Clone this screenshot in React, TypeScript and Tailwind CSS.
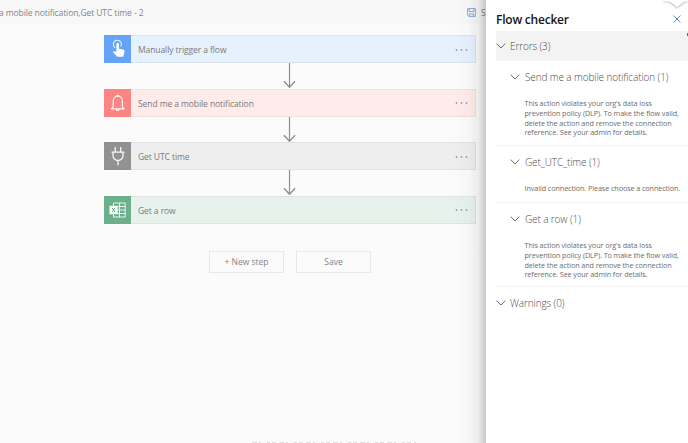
import type { ReactNode } from 'react';

const TouchIcon = () => (
  <svg width="27" height="28" viewBox="0 0 27 28" fill="none">
    <path d="M11.300 12.700a4 4 0 1 1 5.400-1.200" stroke="#fff" strokeWidth="1.200" opacity=".8" />
    <path d="M12.400 9.200a1.300 1.300 0 0 1 2.600 0v4.600l4.200.8c1 .2 1.400.8 1.300 1.700l-.8 4.200c-.1.8-.5 1.200-1.200 1.200h-4.800c-.5 0-.9-.2-1.200-.6l-3.200-3.700c-.4-.5 0-1.200.7-1.200l2.400.5z" fill="#fff" />
  </svg>
);

const BellIcon = () => (
  <svg width="27" height="28" viewBox="0 0 27 28" fill="none" stroke="#fff" strokeOpacity=".9" strokeWidth="1.2">
    <path d="M7.200 19.800c1.500-.7 2-1.300 2-2.800v-5.200a4.600 4.600 0 0 1 9.200 0V17c0 1.500.5 2.100 2 2.800z" />
    <path d="M12.200 20c.2 1.900 2.800 1.900 3 0" />
    <path d="M12.600 7.200c.2-1.100 2.200-1.100 2.400 0" />
  </svg>
);

const PlugIcon = () => (
  <svg width="27" height="28" viewBox="0 0 27 28" fill="none" stroke="#fff" strokeOpacity=".92" strokeWidth="1.3">
    <path d="M11.200 5v5M16.700 5v5M7.500 10.200h13M9 10.400v3.100a5 5 0 0 0 10 0v-3.100M14 18.500v4.700" />
  </svg>
);

const ExcelIcon = () => (
  <svg width="27" height="28" viewBox="0 0 27 28" fill="none">
    <path d="M9.500 7h11.700v14H9.500zM9.500 10.500h11.700M9.500 14h11.700M9.500 17.500h11.700M15.500 7v14" stroke="#fff" strokeOpacity=".85" strokeWidth="1" />
    <path d="M5.500 9.800h8.200v8.400H5.500z" fill="#fff" />
    <path d="M8 11.800l3.200 4.500M11.200 11.800L8 16.300" stroke="#67aa85" strokeWidth="1" />
  </svg>
);

const Arrow = () => (
  <svg className="ml-[179px] block" width="14" height="25.500" viewBox="0 0 14 25.500" fill="none" stroke="#8f8f8f">
    <path d="M6.500 0v24" strokeWidth="1.200" />
    <path d="M.9 18.300l5.600 5.900 5.600-5.900" strokeWidth="1.400" />
  </svg>
);

const Chevron = () => (
  <svg className="shrink-0" width="10" height="6" viewBox="0 0 10 6" fill="none" stroke="#6a6a6a" strokeWidth="1">
    <path d="M.7.6L5 5 9.300.6" />
  </svg>
);

function Step({ label, tile, body, children }: { label: string; tile: string; body: string; children: ReactNode }) {
  return (
    <div className={`flex h-[28px] w-[372px] items-center border border-black/5 ${body}`}>
      <div className={`-ml-px flex h-[28px] w-[27px] shrink-0 ${tile}`}>{children}</div>
      <span className="mt-[3px] ml-[7px] text-[8.500px] tracking-[-0.08px] whitespace-nowrap text-[#7b7b7b]">{label}</span>
      <svg className="mt-px mr-[7px] ml-auto" width="13" height="2" viewBox="0 0 13 2" fill="#86a3c4">
        <circle cx="1.500" cy="1" r=".9" />
        <circle cx="6.500" cy="1" r=".9" />
        <circle cx="11.500" cy="1" r=".9" />
      </svg>
    </div>
  );
}

function Issue({ title, height, children }: { title: string; height: string; children: ReactNode }) {
  return (
    <section className={`border-b border-[#f3f3f3] pl-[14px] ${height}`}>
      <div className="flex h-[31px] items-center gap-[5px]">
        <Chevron />
        <h3 className="pt-px text-[10px] font-light tracking-[-0.12px] whitespace-nowrap text-[#4c4c4c]">{title}</h3>
      </div>
      <div className="mt-[7px] ml-[14.500px] text-[7.200px] leading-[9.800px] tracking-[-0.07px] whitespace-nowrap text-[#6c6c6c]">{children}</div>
    </section>
  );
}

const Policy = () => (
  <>
    <p>This action violates your org's data loss</p>
    <p>prevention policy (DLP). To make the flow valid,</p>
    <p>delete the action and remove the connection</p>
    <p>reference. See your admin for details.</p>
  </>
);

export default function App() {
  return (
    <div className="flex h-[443px] w-[688px] overflow-hidden bg-[#fbfbfb] font-['Open_Sans','Noto_Sans',sans-serif]">
      <main className="relative flex h-full w-[486px] shrink-0 flex-col overflow-hidden">
        <header className="flex h-[25px] shrink-0 items-center bg-[#f8f8f8] text-[8.500px] whitespace-nowrap text-[#858585]">
          <span className="mt-[2px] -ml-px w-[468px] shrink-0 tracking-[-0.09px]">a mobile notification,Get UTC time - 2</span>
          <svg className="shrink-0" width="9" height="9" viewBox="0 0 9 9" fill="none" stroke="#7d9fd0" strokeWidth=".9">
            <path d="M.6.600h7.800v7.800H1.800L.600 7.200zM2.300.600v3h4.500v-3M2.500 8.400V5.900h3.900v2.500" />
          </svg>
          <span className="mt-[2px] ml-[5px]">S</span>
        </header>
        <div className="mt-[10px] ml-[104px] flex flex-col">
          <Step label="Manually trigger a flow" tile="bg-[#64a3f6]" body="bg-[#e6f1fe]"><TouchIcon /></Step>
          <Arrow />
          <Step label="Send me a mobile notification" tile="bg-[#fb8585]" body="bg-[#ffecea]"><BellIcon /></Step>
          <Arrow />
          <Step label="Get UTC time" tile="bg-[#929292]" body="bg-[#eeeeee]"><PlugIcon /></Step>
          <Arrow />
          <Step label="Get a row" tile="bg-[#6baf8b]" body="bg-[#e8f2ec]"><ExcelIcon /></Step>
        </div>
        <div className="mt-[27px] ml-[209px] flex gap-[12px] text-[8.500px] text-[#858585]">
          <button className="h-[22px] w-[75px] border border-[#e8e8e8] pt-[2px]">+ New step</button>
          <button className="h-[22px] w-[75px] border border-[#e8e8e8] pt-[2px]">Save</button>
        </div>
        <svg className="mt-auto ml-[252px] block" width="164" height="1" viewBox="0 0 164 1">
          <path d="M0 .5h164" stroke="#dedede" strokeDasharray="5 2 2 6 3 2 4 3" />
        </svg>
        <div className="pointer-events-none absolute inset-y-0 right-0 w-[36px] bg-[linear-gradient(to_right,transparent,rgba(0,0,0,0.015)_50%,rgba(0,0,0,0.06)_78%,rgba(0,0,0,0.2))]" />
      </main>
      <aside className="relative h-full w-[202px] bg-white pl-[10px]">
        <svg className="absolute top-0 right-0 drop-shadow-[0_1px_1px_rgba(0,0,0,0.3)]" width="25" height="9" viewBox="0 0 25 9">
          <path d="M0 0H25V1H22L14 7 6 1H0z" fill="#fff" />
        </svg>
        <header className="flex h-[31px] items-center justify-between pt-[7px] pr-[7px]">
          <h1 className="pt-px text-[12px] font-semibold tracking-[-0.22px] whitespace-nowrap text-[#151515]">Flow checker</h1>
          <svg width="8" height="8" viewBox="0 0 8 8" stroke="#5c8cc8" strokeWidth="1"><path d="M.5.5l7 7M7.500.5l-7 7" /></svg>
        </header>
        <div className="flex h-[30px] items-center gap-[4px] bg-[#f3f3f3]">
          <Chevron />
          <h2 className="pt-px text-[10px] font-light tracking-[-0.12px] text-[#4c4c4c]">Errors (3)</h2>
        </div>
        <Issue title="Send me a mobile notification (1)" height="h-[85px]"><Policy /></Issue>
        <Issue title="Get_UTC_time (1)" height="h-[57px]"><p>Invalid connection. Please choose a connection.</p></Issue>
        <Issue title="Get a row (1)" height="h-[84px]"><Policy /></Issue>
        <div className="flex h-[31px] items-center gap-[4px]">
          <Chevron />
          <h2 className="pt-px text-[10px] font-light tracking-[-0.12px] text-[#4c4c4c]">Warnings (0)</h2>
        </div>
        <i className="absolute top-[33px] right-0 h-[3px] w-px bg-[#666]" />
      </aside>
    </div>
  );
}
